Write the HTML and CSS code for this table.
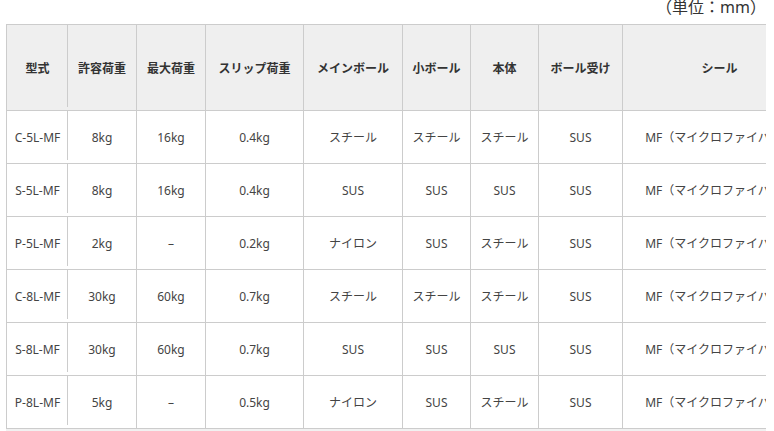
FILE: index.html
```html
<!DOCTYPE html>
<html lang="ja">
<head>
<meta charset="utf-8">
<link rel="stylesheet" href="styles.css">
</head>
<body>
<div class="unit">（単位：mm）</div>
<div class="scroller">
  <table class="spec">
    <colgroup>
      <col class="c1"><col class="c2"><col class="c3"><col class="c4"><col class="c5"><col class="c6"><col class="c7"><col class="c8"><col class="c9">
    </colgroup>
    <thead>
      <tr>
        <th>型式</th><th>許容荷重</th><th>最大荷重</th><th>スリップ荷重</th><th>メインボール</th><th>小ボール</th><th>本体</th><th>ボール受け</th><th>シール</th>
      </tr>
    </thead>
    <tbody>
      <tr><td>C-5L-MF</td><td>8kg</td><td>16kg</td><td>0.4kg</td><td>スチール</td><td>スチール</td><td>スチール</td><td>SUS</td><td>MF（マイクロファイバー）</td></tr>
      <tr><td>S-5L-MF</td><td>8kg</td><td>16kg</td><td>0.4kg</td><td>SUS</td><td>SUS</td><td>SUS</td><td>SUS</td><td>MF（マイクロファイバー）</td></tr>
      <tr><td>P-5L-MF</td><td>2kg</td><td>–</td><td>0.2kg</td><td>ナイロン</td><td>SUS</td><td>スチール</td><td>SUS</td><td>MF（マイクロファイバー）</td></tr>
      <tr><td>C-8L-MF</td><td>30kg</td><td>60kg</td><td>0.7kg</td><td>スチール</td><td>スチール</td><td>スチール</td><td>SUS</td><td>MF（マイクロファイバー）</td></tr>
      <tr><td>S-8L-MF</td><td>30kg</td><td>60kg</td><td>0.7kg</td><td>SUS</td><td>SUS</td><td>SUS</td><td>SUS</td><td>MF（マイクロファイバー）</td></tr>
      <tr><td>P-8L-MF</td><td>5kg</td><td>–</td><td>0.5kg</td><td>ナイロン</td><td>SUS</td><td>スチール</td><td>SUS</td><td>MF（マイクロファイバー）</td></tr>
    </tbody>
  </table>
</div>
<div class="track"></div>
</body>
</html>
```
FILE: styles.css
```css
html, body {
  margin: 0;
  padding: 0;
  background: #ffffff;
}
body {
  font-family: "Noto Sans", "Noto Sans CJK JP", sans-serif;
  color: #333333;
  padding-left: 6px;
  width: 760px;
}
.unit {
  font-size: 16px;
  line-height: 14px;
  height: 14px;
  text-align: right;
  margin-bottom: 10px;
  color: #333333;
  white-space: nowrap;
}
.scroller {
  width: 760px;
  overflow: hidden;
}
.spec {
  border-collapse: separate;
  border-spacing: 0;
  table-layout: fixed;
  width: 811px;
  border-left: 1px solid #cccccc;
  border-top: 1px solid #cccccc;
  font-size: 12px;
}
.c1 { width: 61px; }
.c2 { width: 69px; }
.c3 { width: 69px; }
.c4 { width: 98px; }
.c5 { width: 99px; }
.c6 { width: 68px; }
.c7 { width: 68px; }
.c8 { width: 84px; }
.c9 { width: 194px; }
.spec th, .spec td {
  box-sizing: border-box;
  border-right: 1px solid #cccccc;
  border-bottom: 1px solid #cccccc;
  text-align: center;
  vertical-align: middle;
  padding: 0;
  white-space: nowrap;
  overflow: hidden;
}
.spec th {
  height: 86px;
  background: #efefef;
  font-weight: bold;
  color: #333333;
}
.spec td {
  height: 53px;
  color: #444444;
}
.spec th:first-child, .spec td:first-child {
  border-right: none;
  position: relative;
}
.spec th:first-child::after, .spec td:first-child::after {
  content: "";
  position: absolute;
  right: 0;
  top: 0;
  bottom: 3px;
  width: 1px;
  background: #cccccc;
}
.track {
  width: 760px;
  height: 15px;
  background: #f1f1f1;
}
```
